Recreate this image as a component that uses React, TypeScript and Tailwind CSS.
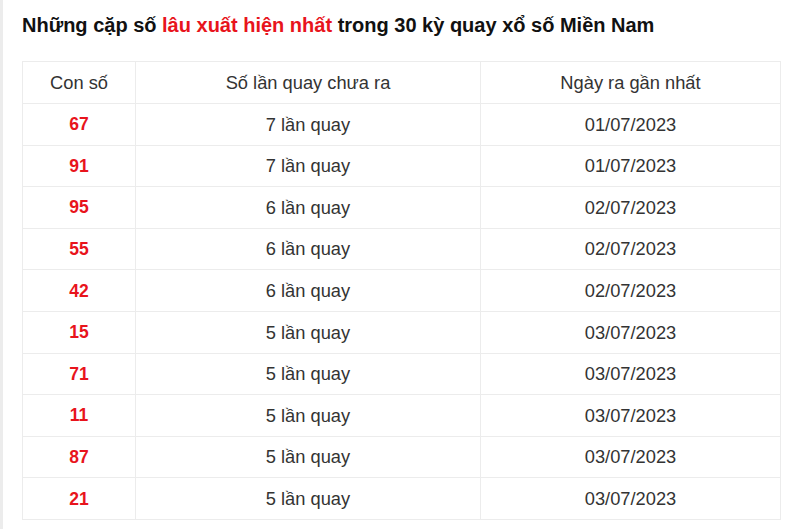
const rows = [
  { num: "67", count: "7 lần quay", date: "01/07/2023" },
  { num: "91", count: "7 lần quay", date: "01/07/2023" },
  { num: "95", count: "6 lần quay", date: "02/07/2023" },
  { num: "55", count: "6 lần quay", date: "02/07/2023" },
  { num: "42", count: "6 lần quay", date: "02/07/2023" },
  { num: "15", count: "5 lần quay", date: "03/07/2023" },
  { num: "71", count: "5 lần quay", date: "03/07/2023" },
  { num: "11", count: "5 lần quay", date: "03/07/2023" },
  { num: "87", count: "5 lần quay", date: "03/07/2023" },
  { num: "21", count: "5 lần quay", date: "03/07/2023" },
];

export default function App() {
  return (
    <div className="flex h-[529px] w-[800px] bg-white font-['Liberation_Sans',Arial,sans-serif]">
      <div className="w-[3px] bg-[#ececec]" />
      <div className="flex-1 pl-[19px] pt-[11px]">
        <h1 className="text-[20px] font-bold leading-[28px] text-[#111]">
          Những cặp số <span className="text-[#e8141c]">lâu xuất hiện nhất</span> trong 30 kỳ quay xổ số Miền Nam
        </h1>
        <table className="mt-[22px] w-[758px] table-fixed border-collapse border border-[#ececec] text-center text-[18.3px] text-[#333]">
          <colgroup>
            <col className="w-[113px]" />
            <col className="w-[345px]" />
            <col className="w-[300px]" />
          </colgroup>
          <thead>
            <tr className="h-[42px]">
              <th className="border border-[#ececec] font-normal">Con số</th>
              <th className="border border-[#ececec] font-normal">Số lần quay chưa ra</th>
              <th className="border border-[#ececec] font-normal">Ngày ra gần nhất</th>
            </tr>
          </thead>
          <tbody>
            {rows.map((r) => (
              <tr key={r.num} className="h-[41.6px]">
                <td className="border border-[#ececec] text-[17.5px] font-bold text-[#e8141c]">{r.num}</td>
                <td className="border border-[#ececec]">{r.count}</td>
                <td className="border border-[#ececec]">{r.date}</td>
              </tr>
            ))}
          </tbody>
        </table>
      </div>
    </div>
  );
}
